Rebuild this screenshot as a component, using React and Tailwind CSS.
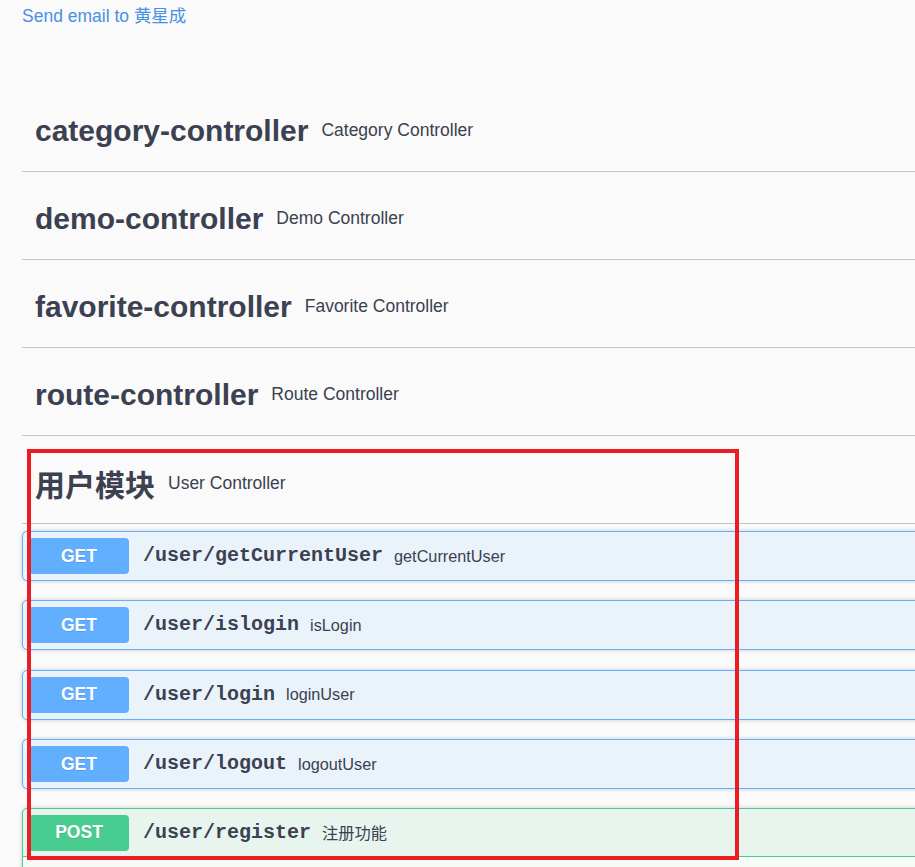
import React from "react";

const tags = [
  { name: "category-controller", desc: "Category Controller" },
  { name: "demo-controller", desc: "Demo Controller" },
  { name: "favorite-controller", desc: "Favorite Controller" },
  { name: "route-controller", desc: "Route Controller" },
];

const ops = [
  { method: "GET", path: "/user/getCurrentUser", desc: "getCurrentUser" },
  { method: "GET", path: "/user/islogin", desc: "isLogin" },
  { method: "GET", path: "/user/login", desc: "loginUser" },
  { method: "GET", path: "/user/logout", desc: "logoutUser" },
];

function Tag({ name, desc, cjk }) {
  return (
    <div className="h-[82px] mb-[6px] flex items-center border-b border-[#c4c5ca] pl-[13px]">
      <span
        className={
          "text-[30px] font-bold leading-none text-[#3b4151] " +
          (cjk ? "font-['Noto_Sans_CJK_SC',sans-serif]" : "")
        }
      >
        {name}
      </span>
      <span
        className={
          "pl-[13px] text-[17.5px] leading-none text-[#3b4151] " + (cjk ? "pt-[3px]" : "pt-[1px]")
        }
      >
        {desc}
      </span>
    </div>
  );
}

function GetOp({ path, desc }) {
  return (
    <div className="h-[50px] mb-[19.25px] border border-[#61affe] rounded-[5px] bg-[#ebf3fa] shadow-[0_0_4px_rgba(0,0,0,0.19)] flex items-center px-[6px]">
      <div className="w-[100px] h-[36px] rounded-[4px] bg-[#61affe] flex items-center justify-center text-white font-bold text-[17.5px] [text-shadow:0_1px_0_rgba(0,0,0,0.1)]">
        GET
      </div>
      <span className="ml-[14px] font-['Liberation_Mono',monospace] font-bold text-[20px] text-[#3b4151]">
        {path}
      </span>
      <span className="ml-[11px] text-[16.25px] text-[#3b4151]">{desc}</span>
    </div>
  );
}

export default function App() {
  return (
    <div className="relative w-[915px] h-[867px] overflow-hidden bg-[#fafafa] font-['Liberation_Sans',Arial,sans-serif]">
      <div className="w-[1100px] pl-[22px]">
        <div className="mt-[5px] h-[20px] leading-[20px] text-[17.5px] text-[#4990e2] mb-[65px]">
          Send email to <span className="font-['Noto_Sans_CJK_SC',sans-serif] text-[17.5px]">黄星成</span>
        </div>
        {tags.map((t) => (
          <Tag key={t.name} name={t.name} desc={t.desc} />
        ))}
        <Tag name="用户模块" desc="User Controller" cjk />
        <div className="pt-[1px]">
          {ops.map((o) => (
            <GetOp key={o.path} path={o.path} desc={o.desc} />
          ))}
          <div className="border border-[#49cc90] rounded-[5px] bg-[#e8f5ef] shadow-[0_0_4px_rgba(0,0,0,0.19)]">
            <div className="h-[48px] flex items-center px-[6px] border-b border-[#49cc90]">
              <div className="w-[100px] h-[36px] rounded-[4px] bg-[#49cc90] flex items-center justify-center text-white font-bold text-[17.5px] [text-shadow:0_1px_0_rgba(0,0,0,0.1)]">
                POST
              </div>
              <span className="ml-[14px] font-['Liberation_Mono',monospace] font-bold text-[20px] text-[#3b4151]">
                /user/register
              </span>
              <span className="ml-[11px] text-[16.25px] text-[#3b4151] font-['Noto_Sans_CJK_SC',sans-serif]">
                注册功能
              </span>
            </div>
            <div className="h-[60px] bg-[#f6fbf8] rounded-b-[5px]"></div>
          </div>
        </div>
      </div>
      <div className="absolute left-[27px] top-[449px] w-[712px] h-[411px] border-4 border-[#ed1c24]"></div>
    </div>
  );
}
